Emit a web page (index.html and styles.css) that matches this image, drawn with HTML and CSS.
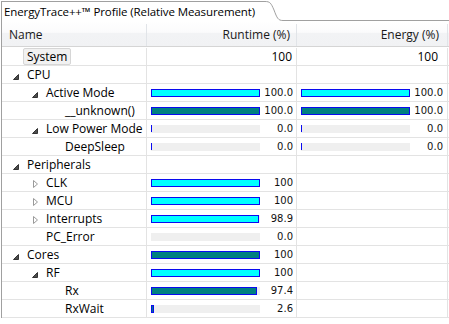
FILE: index.html
```html
<!DOCTYPE html>
<html lang="en">
<head>
    <meta charset="UTF-8">
    <title>EnergyTrace++ Profile</title>
    <link rel="stylesheet" href="styles.css">
</head>
<body>
    <div class="view">
        <div class="tabs">
            <div class="tab">EnergyTrace++™ Profile (Relative Measurement)</div>
            <svg class="tab-curve" width="18" height="21" viewBox="0 0 18 21">
                <path d="M0 1.5 C5 1.5 6 3 9 10 C12 18 13 20.5 18 20.5" fill="none" stroke="#a0a0a0"/>
            </svg>
            <div class="tab-fill"></div>
        </div>

        <div class="tree">
            <div class="head">
                <div class="hcell name">Name</div>
                <div class="hcell runtime">Runtime (%)</div>
                <div class="hcell energy">Energy (%)</div>
            </div>
            <div class="rows" id="rows">
                <!-- rows are generated below -->
            </div>
        </div>
    </div>

    <script>
        // tree data: level, toggle state, runtime / energy values
        const data = [
            { name: 'System', level: 0, focus: true, rt: '100', en: '100' },
            { name: 'CPU', level: 0, toggle: 'open' },
            { name: 'Active Mode', level: 1, toggle: 'open', rtBar: [100, '100.0', 'cyan'], enBar: [100, '100.0', 'cyan'] },
            { name: '__unknown()', level: 2, rtBar: [100, '100.0', 'teal'], enBar: [100, '100.0', 'teal'] },
            { name: 'Low Power Mode', level: 1, toggle: 'open', rtBar: [0, '0.0', 'cyan'], enBar: [0, '0.0', 'cyan'] },
            { name: 'DeepSleep', level: 2, rtBar: [0, '0.0', 'teal'], enBar: [0, '0.0', 'teal'] },
            { name: 'Peripherals', level: 0, toggle: 'open' },
            { name: 'CLK', level: 1, toggle: 'closed', rtBar: [100, '100', 'cyan'] },
            { name: 'MCU', level: 1, toggle: 'closed', rtBar: [100, '100', 'cyan'] },
            { name: 'Interrupts', level: 1, toggle: 'closed', rtBar: [98.9, '98.9', 'cyan'] },
            { name: 'PC_Error', level: 1, rtBar: [0.0, '0.0', 'cyan'], noTick: true },
            { name: 'Cores', level: 0, toggle: 'open', rtBar: [100, '100', 'teal'] },
            { name: 'RF', level: 1, toggle: 'open', rtBar: [100, '100', 'cyan'] },
            { name: 'Rx', level: 2, rtBar: [97.4, '97.4', 'teal'] },
            { name: 'RxWait', level: 2, rtBar: [2.6, '2.6', 'teal'] }
        ];

        const BAR_WIDTH = 109;

        const openIcon = '<svg width="14" height="17" viewBox="0 0 14 17"><path d="M5.5 8.5 L5.5 13.5 L0.5 13.5 Z" fill="#4d4d4d" stroke="#333"/></svg>';
        const closedIcon = '<svg width="14" height="17" viewBox="0 0 14 17"><path d="M1.5 6.5 L5.5 10 L1.5 13.5 Z" fill="#fff" stroke="#9a9a9a"/></svg>';

        function barCell(bar, noTick) {
            if (!bar) return '';
            const [value, label, color] = bar;
            let fill;
            if (value === 0) {
                fill = noTick ? '' : '<div class="fill zero"></div>';
            } else {
                const w = Math.max(3, Math.round(value / 100 * BAR_WIDTH));
                fill = '<div class="fill ' + color + '" style="width:' + w + 'px"></div>';
            }
            return '<div class="track">' + fill + '</div><span class="val">' + label + '</span>';
        }

        function renderRows() {
            const rows = document.getElementById('rows');
            rows.innerHTML = '';

            data.forEach(d => {
                const row = document.createElement('div');
                row.className = 'row';

                let icon = '';
                if (d.toggle === 'open') icon = openIcon;
                if (d.toggle === 'closed') icon = closedIcon;

                const label = d.focus
                    ? '<span class="focus">' + d.name + '</span>'
                    : '<span>' + d.name + '</span>';

                const rt = d.rt ? '<span class="plain">' + d.rt + '</span>' : barCell(d.rtBar, d.noTick);
                const en = d.en ? '<span class="plain">' + d.en + '</span>' : barCell(d.enBar, d.noTick);

                row.innerHTML =
                    '<div class="cell name" style="padding-left:' + (11 + d.level * 19) + 'px">' +
                        '<span class="toggle">' + icon + '</span>' + label +
                    '</div>' +
                    '<div class="cell runtime">' + rt + '</div>' +
                    '<div class="cell energy">' + en + '</div>';

                rows.appendChild(row);
            });
        }

        renderRows();
    </script>
</body>
</html>
```

FILE: styles.css
```css
body {
    margin: 0;
    background: #fff;
    font-family: "Open Sans", "Noto Sans", sans-serif;
    font-size: 12px;
    color: #000;
}

.view {
    width: 449px;
    height: 324px;
    overflow: hidden;
}

/* tab strip */
.tabs {
    display: flex;
    height: 21px;
}

.tab {
    width: 261px;
    margin-left: 1px;
    margin-top: 1px;
    padding-left: 2px;
    border-left: 1px solid #a0a0a0;
    border-top: 1px solid #a0a0a0;
    font-size: 11.5px;
    letter-spacing: -0.1px;
    line-height: 20px;
    white-space: nowrap;
}

.tab-curve {
    flex: none;
}

.tab-fill {
    flex: 1;
    border-bottom: 1px solid #a0a0a0;
}

/* tree table */
.tree {
    margin-left: 1px;
    border-left: 1px solid #a0a0a0;
}

.head {
    display: grid;
    grid-template-columns: 145px 150px 151px;
    padding-top: 3px;
    height: 22px;
    background: linear-gradient(to bottom, #ffffff 0%, #fbfbfc 45%, #f2f3f5 50%, #f1f2f4 100%);
    border-bottom: 1px solid #d5d5d5;
}

.hcell {
    line-height: 22px;
    border-right: 1px solid #e1e4e8;
    color: #1a1a1a;
}

.hcell.name {
    padding-left: 7px;
}

.hcell.runtime {
    text-align: right;
    padding-right: 6px;
}

.hcell.energy {
    text-align: right;
    padding-right: 8px;
}

.rows {
    padding-top: 1px;
}

.row {
    display: grid;
    grid-template-columns: 145px 150px 151px;
    height: 17px;
    border-bottom: 1px solid #e3e3e3;
}

.cell {
    display: flex;
    align-items: center;
    border-right: 1px solid #e3e3e3;
    white-space: nowrap;
    line-height: 17px;
}

.toggle {
    width: 14px;
    height: 17px;
    flex: none;
}

.toggle svg {
    display: block;
}

.focus {
    margin-left: -4px;
    padding: 0 3px;
    line-height: 15px;
    border: 1px solid #d6d6d6;
    border-radius: 2px;
    background: #f1f1f1;
}

.cell.runtime,
.cell.energy {
    padding-left: 4px;
}

.plain {
    margin-left: auto;
}

.cell.runtime .plain {
    padding-right: 4px;
}

.cell.energy .plain {
    padding-right: 9px;
}

/* bars */
.track {
    width: 109px;
    height: 8px;
    flex: none;
    background: #efefef;
}

.fill {
    height: 8px;
    box-sizing: border-box;
    border: 1px solid #0a0af0;
}

.fill.cyan {
    background: #00ffff;
}

.fill.teal {
    background: #008080;
}

.fill.zero {
    width: 1px;
    height: 7px;
    border: none;
    background: #0a0af0;
}

.val {
    width: 33px;
    flex: none;
    text-align: right;
    font-family: "DejaVu Sans", sans-serif;
    font-size: 10px;
    color: #111;
}
```
